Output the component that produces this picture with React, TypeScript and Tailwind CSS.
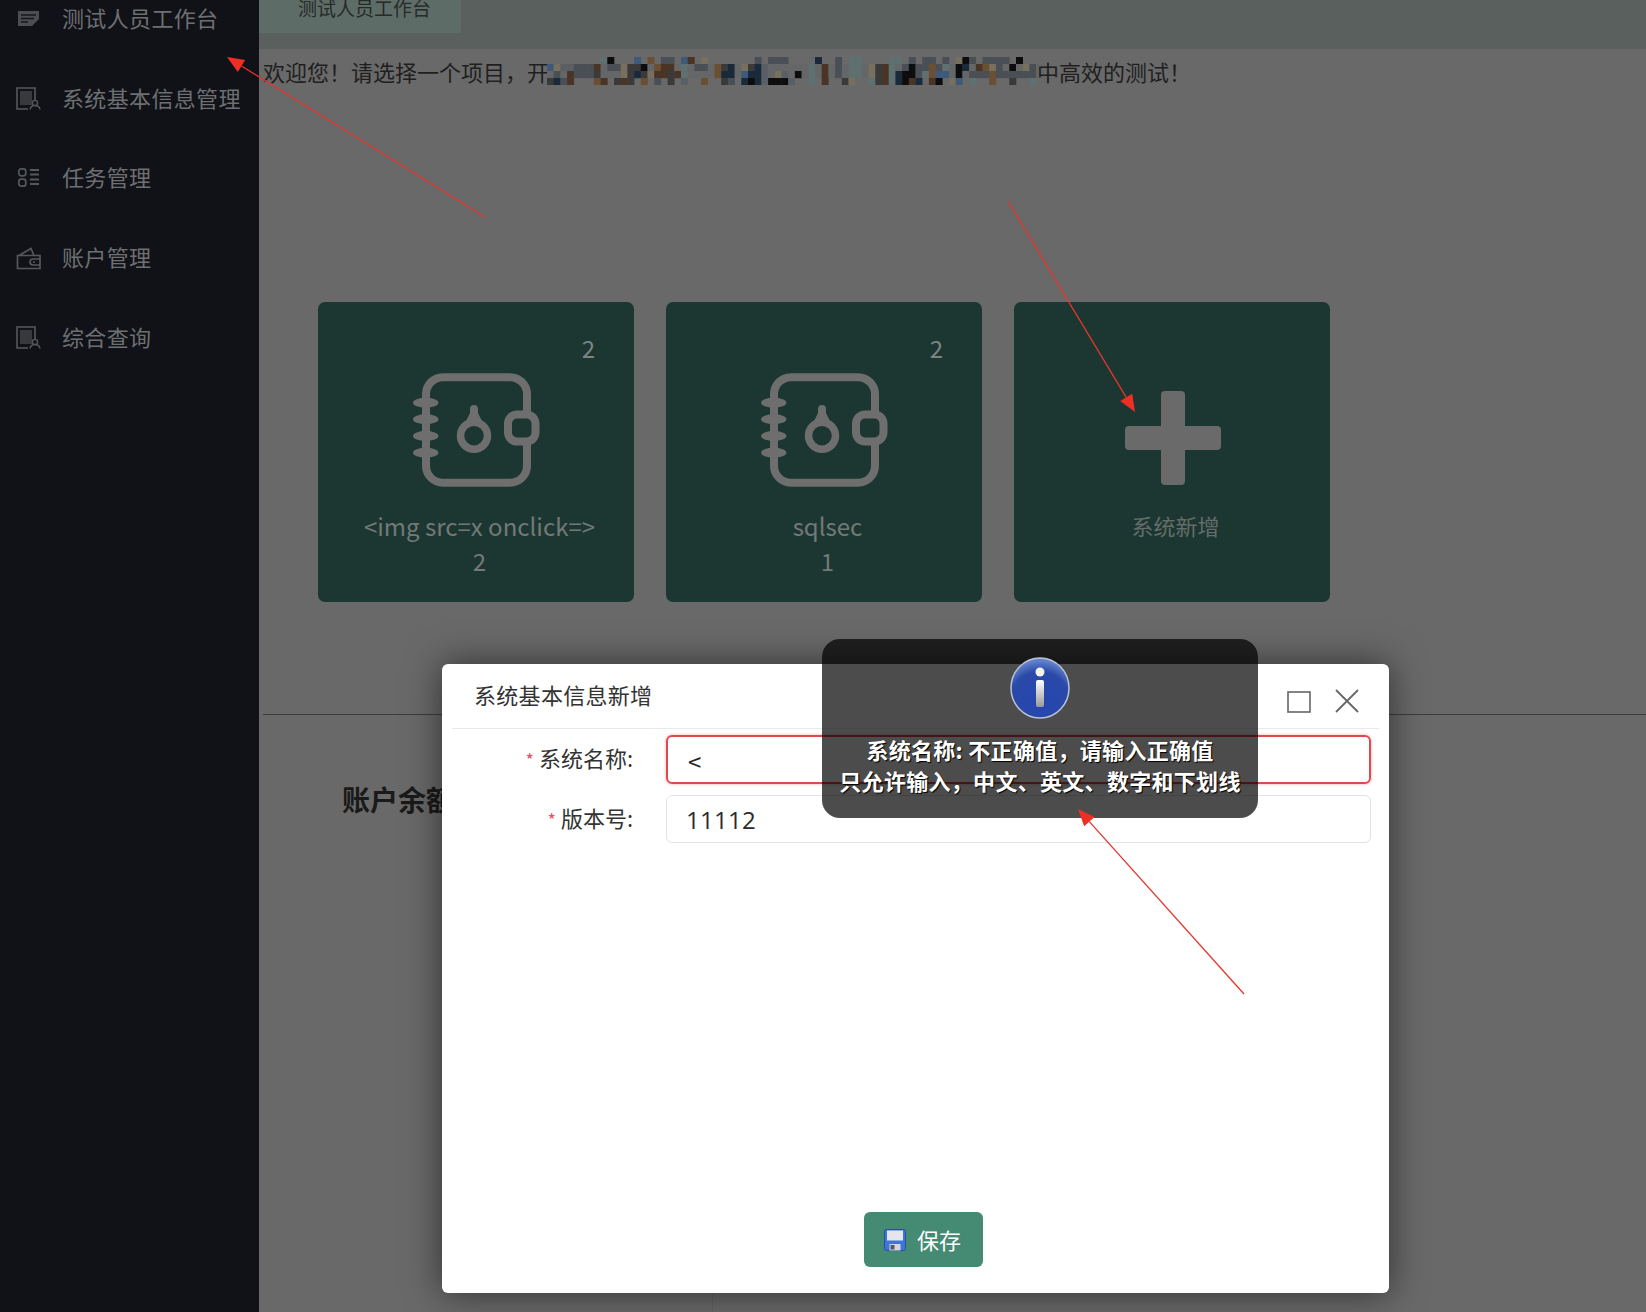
import React from "react";

const PAL: Record<string, string> = {
  a: "#5a5f66", b: "#3a3a3a", k: "#0d0d0d", n: "#4a3426", o: "#6b4f33", u: "#3e5a7a",
  d: "#1a2a3a", g: "#5f7070", t: "#77705f", s: "#4a4f55", ".": "#646668",
};
const ROWS = [
  ".........gk...u.o.ss.un.t.......s.sss..".slice(1) + "..d..s.gg....gg.s.ss.s.tks.ssss.k...",
  ".utaasssn.sstbbk.onn.g.ss.obd.tbda.....".slice(1) + ".g.n.s.gg.tbng.skssosg.kd.nots.k.ts.",
  "b.s.nsssb...tbdbtnnbng....odd.udda.ta.k".slice(1) + ".g.n.s.gg.tbngdkksgouu.k.sssossssss.",
  ".bdsn...on.bnb.o.s.b.a..o..bs.dkdakkka.".slice(1) + ".g.n..bt..gbngdknd.nk.tu.g..o..b..g.",
];

function Mosaic() {
  const w = 6.7;
  return (
    <svg width={496} height={28} viewBox="0 0 496 28" className="shrink-0 -ml-[2px]">
      {ROWS.map((row, y) =>
        row.split("").map((c, x) =>
          c === "." && (y === 0 || y === 3) ? null : (
            <rect key={`${x}-${y}`} x={x * w} y={y * 7} width={w + 0.3} height={7.2} fill={PAL[c]} />
          )
        )
      )}
    </svg>
  );
}

const C = "#55585b";

function IconDoc() {
  return (
    <svg width="26" height="24" viewBox="0 0 26 24" className="shrink-0">
      <path d="M2 4h21v8l-7 7H2z" fill="#4b4d50" />
      <path d="M5 8h15M5 11.500h13M5 15h7" stroke="#16171c" strokeWidth="1.400" />
    </svg>
  );
}
function IconRecord() {
  return (
    <svg width="26" height="24" viewBox="0 0 26 24" className="shrink-0">
      <path d="M19 14V1H1v21h11" fill="none" stroke={C} strokeWidth="1.600" />
      <rect x="4" y="4" width="12" height="14" fill="#37393c" />
      <circle cx="19" cy="16" r="2.600" fill="none" stroke={C} strokeWidth="1.400" />
      <path d="M14 22.500c.5-3 2.500-4 5-4s4.500 1 5 4" fill="none" stroke={C} strokeWidth="1.400" />
    </svg>
  );
}
function IconList() {
  return (
    <svg width="26" height="24" viewBox="0 0 26 24" className="shrink-0">
      <rect x="2.800" y="2.800" width="7" height="7" rx="2.500" fill="none" stroke={C} strokeWidth="1.700" />
      <rect x="2.800" y="13.200" width="7" height="7" rx="2.500" fill="none" stroke={C} strokeWidth="1.700" />
      <path d="M14 4h9M14 8.500h9M14 13.500h9M14 18h9" stroke={C} strokeWidth="1.800" />
    </svg>
  );
}
function IconWallet() {
  return (
    <svg width="26" height="24" viewBox="0 0 26 24" className="shrink-0">
      <path d="M1.500 9.500h22.500v13H1.500zM3 9.500L15 2.500l3 7" fill="none" stroke={C} strokeWidth="1.700" />
      <path d="M24 13h-7a3 3 0 000 6h7" fill="none" stroke={C} strokeWidth="1.700" />
      <circle cx="18" cy="16" r="1" fill={C} />
    </svg>
  );
}

function NavItem({ icon, label }: { icon: React.ReactNode; label: string }) {
  return (
    <div className="h-[79.7px] flex items-center pl-[16px] gap-[20px] shrink-0">
      {icon}
      <span className="-translate-y-[2px] text-[22px] leading-none whitespace-nowrap text-[#6d7072] tracking-[0.35px]">
        {label}
      </span>
    </div>
  );
}

function BookIcon() {
  const s = "#6e6e6e";
  return (
    <svg width="127" height="114" viewBox="0 0 127 114" fill="none" className="shrink-0">
      <rect x="13" y="4.200" width="101" height="105.500" rx="17" stroke={s} strokeWidth="8" />
      <ellipse cx="12.700" cy="29.700" rx="12.700" ry="5" fill={s} />
      <ellipse cx="12.700" cy="46.300" rx="12.700" ry="5" fill={s} />
      <ellipse cx="12.700" cy="63" rx="12.700" ry="5" fill={s} />
      <ellipse cx="12.700" cy="79.700" rx="12.700" ry="5" fill={s} />
      <rect x="95" y="41.500" width="27.500" height="27" rx="9" fill="#1c3731" stroke={s} strokeWidth="8" />
      <circle cx="61" cy="62.700" r="13.500" stroke={s} strokeWidth="7.500" />
      <path d="M61 36v13" stroke={s} strokeWidth="8" strokeLinecap="round" />
      <path d="M57 40h8l5 10H52z" fill={s} />
    </svg>
  );
}

function PlusIcon() {
  return (
    <svg width="96" height="94" viewBox="0 0 96 94" className="shrink-0 ml-[2px]">
      <rect x="36" y="0" width="24" height="94" rx="4" fill="#6a6a6a" />
      <rect x="0" y="35" width="96" height="24" rx="4" fill="#6a6a6a" />
    </svg>
  );
}

function Card({ badge, name, count }: { badge: string; name: string; count: string }) {
  return (
    <div className="relative w-[316px] h-[300px] rounded-[7px] bg-[#1c3731] flex flex-col items-center pt-[71px]">
      <span className="absolute right-[39px] top-[28px] text-[24px] leading-[36px] text-[#7d8381]">{badge}</span>
      <BookIcon />
      <div className="mt-[21px] pl-[7px] text-center text-[24px] leading-[35px] text-[#737977] whitespace-nowrap">
        <div>{name}</div>
        <div>{count}</div>
      </div>
    </div>
  );
}

function Arrow({ x1, y1, x2, y2 }: { x1: number; y1: number; x2: number; y2: number }) {
  const len = Math.hypot(x2 - x1, y2 - y1);
  const ux = (x2 - x1) / len;
  const uy = (y2 - y1) / len;
  const L = 17;
  const W = 7;
  const bx = x2 - ux * L;
  const by = y2 - uy * L;
  const pts = `${x2},${y2} ${bx - uy * W},${by + ux * W} ${bx + uy * W},${by - ux * W}`;
  return (
    <g>
      <line x1={x1} y1={y1} x2={bx} y2={by} stroke="#e5352c" strokeWidth="1.300" />
      <polygon points={pts} fill="#ee2f24" />
    </g>
  );
}

function InfoIcon() {
  return (
    <svg width="60" height="62" viewBox="0 0 60 62" className="shrink-0">
      <defs>
        <radialGradient id="infoBg" cx="50%" cy="75%" r="75%">
          <stop offset="0%" stopColor="#2546b0" />
          <stop offset="70%" stopColor="#2a49a8" />
          <stop offset="100%" stopColor="#6f8ed6" />
        </radialGradient>
        <linearGradient id="infoI" x1="0" y1="0" x2="0" y2="1">
          <stop offset="0%" stopColor="#ffffff" />
          <stop offset="100%" stopColor="#9a9a9a" />
        </linearGradient>
      </defs>
      <ellipse cx="30" cy="31" rx="29" ry="30" fill="url(#infoBg)" stroke="#b9c3d6" strokeWidth="1.500" />
      <circle cx="30" cy="15" r="4.500" fill="#f2f2f2" />
      <rect x="26" y="23" width="8" height="27" rx="2" fill="url(#infoI)" />
    </svg>
  );
}

function SaveIcon() {
  return (
    <svg width="22" height="22" viewBox="0 0 22 22" className="shrink-0">
      <rect x="0.500" y="0.500" width="21" height="21" rx="2" fill="#3f74d8" stroke="#28509c" />
      <rect x="3" y="1.500" width="16" height="10" fill="#e4e6ea" />
      <rect x="5.500" y="15" width="11" height="6.500" fill="#d4d6da" />
      <rect x="6.500" y="16" width="4" height="4.500" fill="#555a66" />
    </svg>
  );
}

export default function App() {
  const font = "[font-family:'Noto_Sans_CJK_SC','Open_Sans',sans-serif]";
  return (
    <div className={`relative flex w-[1646px] h-[1312px] overflow-hidden bg-[#696969] ${font}`}>
      <aside className="w-[259px] shrink-0 bg-[#111217] flex flex-col overflow-hidden">
        <div className="-mt-[21px] flex flex-col">
          <NavItem icon={<IconDoc />} label="测试人员工作台" />
          <NavItem icon={<IconRecord />} label="系统基本信息管理" />
          <NavItem icon={<IconList />} label="任务管理" />
          <NavItem icon={<IconWallet />} label="账户管理" />
          <NavItem icon={<IconRecord />} label="综合查询" />
        </div>
      </aside>

      <main className="flex-1 flex flex-col min-w-0">
        <div className="h-[49px] shrink-0 bg-[#5a605e] overflow-hidden flex items-start">
          <div className="w-[202px] h-[38px] bg-[#5e6c67] rounded-br-[3px] pl-[39px] -mt-[5px] text-[19px] leading-[26px] text-[#262a28] whitespace-nowrap">
            测试人员工作台
          </div>
        </div>

        <div className="h-[46px] shrink-0 pl-[4px] pb-[3px] flex items-center text-[22px] leading-none text-[#1f1f1f] whitespace-nowrap">
          <span>欢迎您！请选择一个项目，开</span>
          <Mosaic />
          <span className="-ml-[6px]">中高效的测试！</span>
        </div>

        <div className="mt-[207px] ml-[59px] flex gap-[32px]">
          <Card badge="2" name="<img src=x onclick=>" count="2" />
          <Card badge="2" name="sqlsec" count="1" />
          <div className="w-[316px] h-[300px] rounded-[7px] bg-[#1c3731] flex flex-col items-center pt-[89px]">
            <PlusIcon />
            <div className="mt-[24px] pl-[7px] text-[22px] leading-[32px] text-[#646c69]">系统新增</div>
          </div>
        </div>

        <div className="mt-[112px] ml-[4px] flex-1 border-t border-[#3d3d3d] flex">
          <div className="w-[450px] border-r border-[#616161] pt-[64px] pl-[79px]">
            <div className="text-[28px] leading-[40px] font-bold text-[#1a1a1a] whitespace-nowrap">账户余额</div>
          </div>
        </div>
      </main>

      {/* modal dialog */}
      <div className="absolute left-[442px] top-[664px] w-[947px] h-[629px] bg-white rounded-[6px] shadow-[0_0_36px_rgba(0,0,0,0.55)] flex flex-col">
        <div className="mx-[10px] h-[65px] shrink-0 border-b border-[#e9e9e9] flex items-start pl-[22px] pr-[20px] justify-between">
          <span className="mt-[16px] text-[22px] leading-[28px] text-[#333] tracking-[0.3px]">系统基本信息新增</span>
          <div className="mt-[27px] flex items-center gap-[24px]">
            <svg width="24" height="22" viewBox="0 0 24 22" fill="none">
              <rect x="1" y="1" width="22" height="20" stroke="#666" strokeWidth="1.600" />
            </svg>
            <svg width="24" height="24" viewBox="0 0 24 24" fill="none" className="-mt-[2px]">
              <path d="M1 1l22 22M23 1L1 23" stroke="#666" strokeWidth="1.800" />
            </svg>
          </div>
        </div>

        <div className="mt-[6px] flex items-center">
          <div className="w-[225px] shrink-0 pr-[34px] pb-[3px] text-right text-[22px] leading-[28px] text-[#333] whitespace-nowrap">
            <span className="text-[#e8505a] text-[18px] mr-[5px]">*</span>系统名称:
          </div>
          <div className="-ml-[1px] w-[705px] h-[49px] rounded-[6px] border-2 border-[#e2494f] shadow-[0_0_3px_rgba(226,73,79,0.5)] pl-[20px] pt-[2px] flex items-center text-[24px] text-[#222]">
            &lt;
          </div>
        </div>

        <div className="mt-[11px] flex items-center">
          <div className="w-[225px] shrink-0 pr-[34px] pb-[3px] text-right text-[22px] leading-[28px] text-[#333] whitespace-nowrap">
            <span className="text-[#e8505a] text-[18px] mr-[5px]">*</span>版本号:
          </div>
          <div className="-ml-[1px] w-[705px] h-[48px] rounded-[6px] border border-[#dfe3ea] pl-[19px] pt-[2px] flex items-center text-[24px] text-[#2a2a2a] tracking-[0.3px] [font-family:'Open_Sans',sans-serif]">
            11112
          </div>
        </div>

        <div className="flex-1 flex items-end justify-center pb-[26px] pl-[16px]">
          <div className="w-[119px] h-[55px] rounded-[6px] bg-[#458a73] flex items-center pl-[20px] gap-[11px] text-[22px] text-white">
            <SaveIcon />
            <span>保存</span>
          </div>
        </div>
      </div>

      {/* validation toast */}
      <div className="absolute left-[822px] top-[639px] w-[436px] h-[179px] rounded-[18px] bg-black/70 flex flex-col items-center pt-[18px]">
        <InfoIcon />
        <div className="mt-[15px] text-center text-[22px] leading-[31px] font-bold text-white whitespace-nowrap tracking-[0.3px] [text-shadow:1px_1px_1px_#000]">
          <div>系统名称: 不正确值，请输入正确值</div>
          <div>只允许输入，中文、英文、数字和下划线</div>
        </div>
      </div>

      {/* annotation arrows */}
      <svg className="absolute left-0 top-0 pointer-events-none" width="1646" height="1312" viewBox="0 0 1646 1312">
        <Arrow x1={485} y1={217} x2={227} y2={57} />
        <Arrow x1={1008} y1={201} x2={1135} y2={412} />
        <Arrow x1={1244} y1={994} x2={1078} y2={809} />
      </svg>
    </div>
  );
}
